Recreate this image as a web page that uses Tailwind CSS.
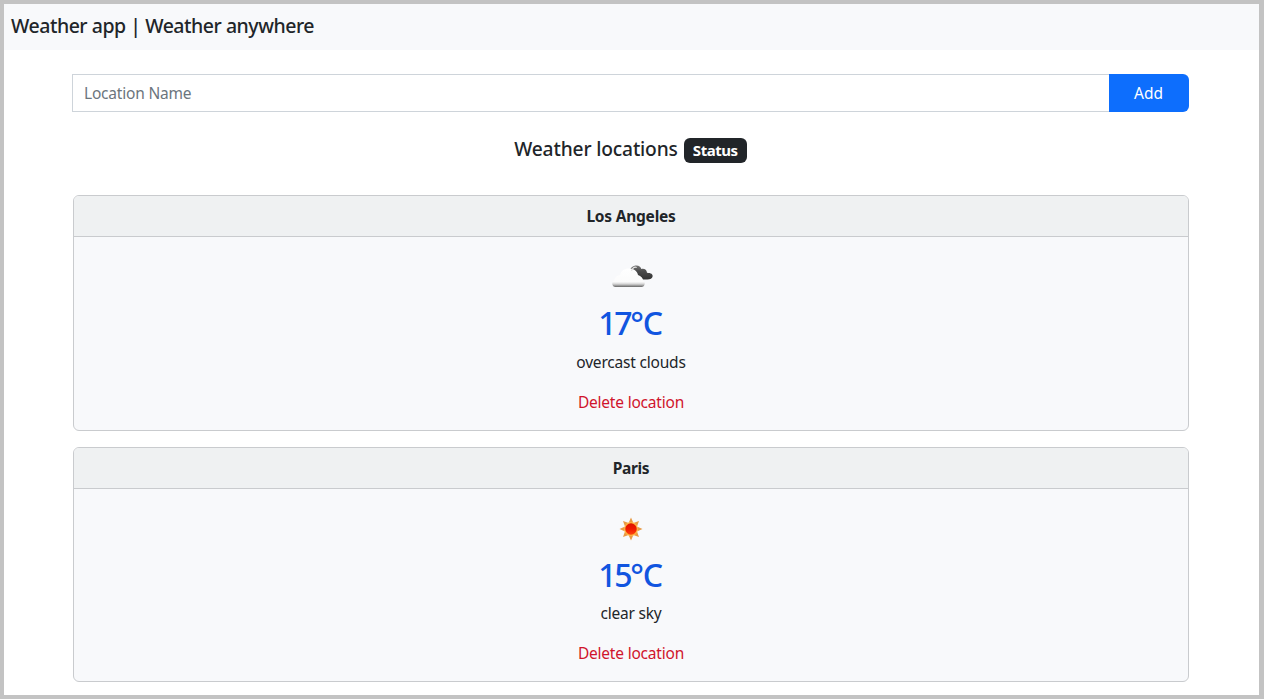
<!DOCTYPE html>
<html lang="en">
<head>
<meta charset="utf-8">
<title>Weather app</title>
<script src="https://cdn.jsdelivr.net/npm/@tailwindcss/browser@4"></script>
</head>
<body class="h-[699px] overflow-hidden border-4 border-r-[5px] border-[#c3c3c3] bg-white font-['Noto_Sans','Open_Sans',sans-serif] text-[15.5px] tracking-[-0.2px] text-[#212529]">
<nav class="flex h-[46px] items-center bg-[#f8f9fb] pl-[7px]">
  <h1 class="-mt-[2px] text-[19.5px] font-medium tracking-[-0.47px] whitespace-nowrap">Weather app | Weather anywhere</h1>
</nav>
<main class="ml-[68px] w-[1117px] pt-6">
  <form class="flex h-[38px]">
    <input class="min-w-0 flex-1 border border-r-0 border-[#ced4da] pt-[2px] pr-3 pl-[11px] placeholder:text-[#6c757d] placeholder:opacity-100" placeholder="Location Name">
    <button type="button" class="w-20 rounded-r-md bg-[#0d6efd] pt-px pr-[1px] tracking-normal text-white">Add</button>
  </form>
  <h2 class="mt-[26px] flex h-[25px] items-center justify-center gap-[6px] text-[19.2px] font-medium tracking-[-0.15px]">
    <span class="-mt-[3px]">Weather locations</span>
    <span class="flex h-[25px] w-[63px] items-center justify-center rounded-md bg-[#212529] text-[15px] font-bold tracking-[-0.45px] text-white">Status</span>
  </h2>
  <section class="mt-8 ml-px h-[236px] rounded-md border border-[#c9cbce] bg-[#f8f9fb] text-center">
    <h3 class="flex h-[41px] items-center justify-center rounded-t-[5px] border-b border-[#c9cbce] bg-[#eff1f2] pt-[2px] font-bold tracking-[-0.22px]">Los Angeles</h3>
    <div class="flex flex-col items-center">
      <svg class="mt-[14px] h-[50px] w-[50px]" viewBox="0 0 50 50">
        <defs>
          <linearGradient id="cloud" x1="0" y1="0" x2="0" y2="1"><stop offset="0" stop-color="#fff"/><stop offset=".72" stop-color="#fbfbfb"/><stop offset=".84" stop-color="#d4d4d4"/><stop offset="1" stop-color="#666"/></linearGradient>
          <linearGradient id="dark" x1="0" y1="0" x2="0" y2="1"><stop offset="0" stop-color="#777"/><stop offset=".4" stop-color="#4c4c4c"/><stop offset="1" stop-color="#333"/></linearGradient>
        </defs>
        <path d="M23 21c1-4 4-6.500 7.500-6.500 2.600 0 4.200 1.300 4.800 3.500 3.200-.8 5.400 1 5.700 3.700 4.200.2 6 1.500 5.600 3.800-.4 2-2.200 2.900-5.300 2.900-3.500.2-6 0-7.500-1.400-2-.5-3.200-2-3.800-4.500-1-1.700-3-2.500-7-1.500z" fill="url(#dark)"/>
        <path d="M9.500 36C6 36 5 31 8 29.500c1-3 2.500-5 6-5.500 1-4 4-6.500 9-6.500 5 0 8 2.500 9 6.500 3 1 5 3 5 5.500 3 1.500 2 6.500-1.500 6.500z" fill="url(#cloud)"/>
        <path d="M25.500 20c.5-2.500 2.500-4.500 5.200-3.500" fill="none" stroke="#e4e4e4" stroke-width="1.200"/>
      </svg>
      <p class="mt-[-1px] h-[46px] pr-[2px] text-[32px] leading-[46px] font-medium tracking-[-1.2px] text-[#1155e0]"><span class="tracking-[-2.300px]">17</span>°C</p>
      <p class="mt-[4px] h-6 leading-6">overcast clouds</p>
      <a class="mt-4 h-6 leading-6 text-[#d0142c]">Delete location</a>
    </div>
  </section>
  <section class="mt-4 ml-px h-[235px] rounded-md border border-[#c9cbce] bg-[#f8f9fb] text-center">
    <h3 class="flex h-[41px] items-center justify-center rounded-t-[5px] border-b border-[#c9cbce] bg-[#eff1f2] pt-[2px] font-bold tracking-[-0.4px]">Paris</h3>
    <div class="flex flex-col items-center">
      <svg class="mt-[14px] h-[50px] w-[50px]" viewBox="0 0 50 50">
        <defs><linearGradient id="sun" x1="0" y1="0" x2="0" y2="1"><stop offset="0" stop-color="#d91400"/><stop offset=".5" stop-color="#f01800"/><stop offset="1" stop-color="#ff4a10"/></linearGradient></defs>
        <path d="M25 14.500l2.200 5h-4.400zM25 37.500l2.200-5h-4.400zM13.500 26l5-2.200v4.400zM36.500 26l-5-2.200v4.400zM17 18l5 1.800-3.200 3.200zM33 18l-5 1.800 3.200 3.200zM17 34l5-1.800-3.200-3.200zM33 34l-5-1.800 3.200-3.200z" fill="#e89a45"/>
        <circle cx="25" cy="26" r="6.300" fill="url(#sun)" stroke="#ffb13b" stroke-width="1.200"/>
      </svg>
      <p class="mt-[-1px] h-[46px] pr-[2px] text-[32px] leading-[46px] font-medium tracking-[-1.2px] text-[#1155e0]"><span class="tracking-[-2.300px]">15</span>°C</p>
      <p class="mt-[3px] h-6 leading-6">clear sky</p>
      <a class="mt-4 h-6 leading-6 text-[#d0142c]">Delete location</a>
    </div>
  </section>
</main>
</body>
</html>
